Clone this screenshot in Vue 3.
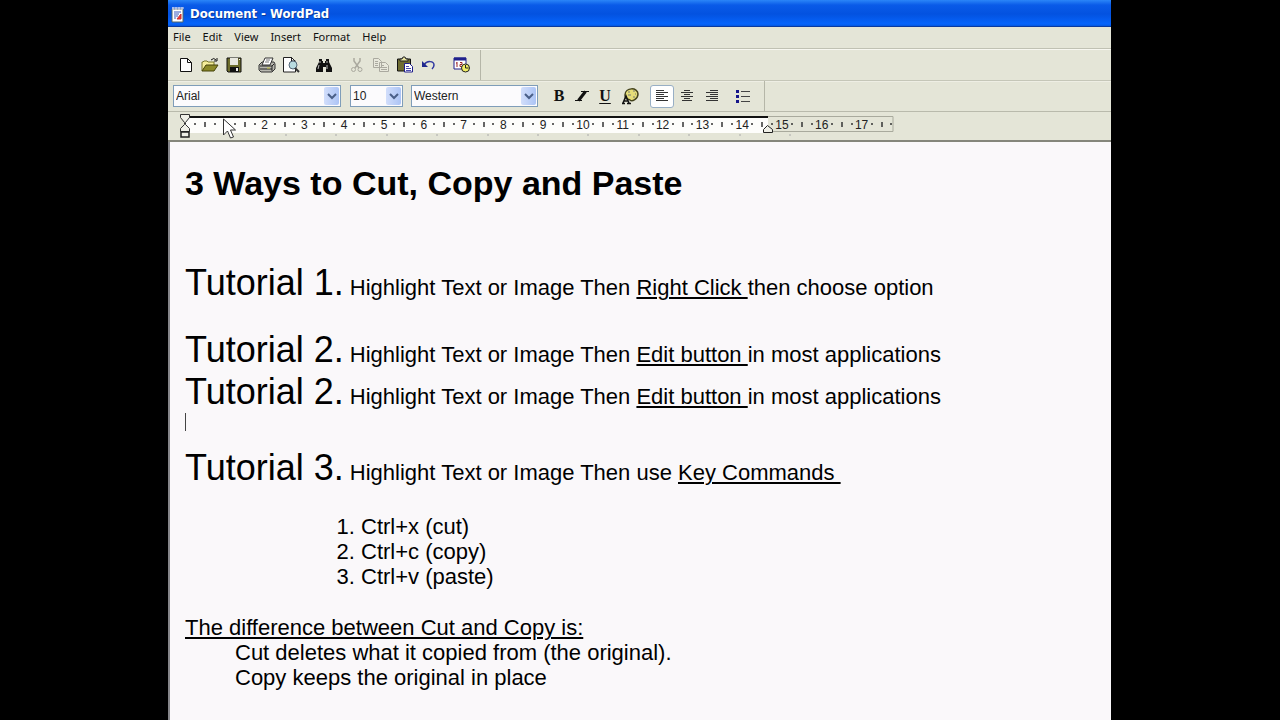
<script setup>
import { ref } from 'vue'

const menus = ['File', 'Edit', 'View', 'Insert', 'Format', 'Help']
const font = ref('Arial')
const size = ref('10')
const script = ref('Western')

const unit = 39.8
const origin = 17
const marks = Array.from({ length: 16 }, (_, i) => i + 2)
const quarters = []
for (let q = 1; q < 72; q++) {
  if (q % 4 !== 0 || q === 4) quarters.push({ x: Math.round(origin + (q * unit) / 4), half: q % 4 === 2 })
}
const tabs = Array.from({ length: 11 }, (_, i) => Math.round(origin + 101 + i * 50.4))

const tutorials = [
  { label: 'Tutorial 1.', lead: 'Highlight Text or Image Then ', mark: 'Right Click ', tail: 'then choose option', cls: 'gap' },
  { label: 'Tutorial 2.', lead: 'Highlight Text or Image Then ', mark: 'Edit button ', tail: 'in most applications', cls: '' },
  { label: 'Tutorial 2.', lead: 'Highlight Text or Image Then ', mark: 'Edit button ', tail: 'in most applications', cls: '' },
]
</script>

<template>
  <div class="screen">
    <main class="window">
      <header class="title">
        <svg width="16" height="17" viewBox="0 0 16 17">
          <path d="M2 3h11v13H2z" fill="#fff" stroke="#566" />
          <path d="M2 2h12M3 1v3M6 1v3M9 1v3M12 1v3" stroke="#dde" fill="none" />
          <path d="M4 6h7M4 8h5M4 10h4M4 12h2" stroke="#3858c0" />
          <path d="M7 13l4-5v5z" fill="#e33" stroke="#c33" />
        </svg>
        <span>Document - WordPad</span>
      </header>
      <nav class="menu">
        <button v-for="m in menus" :key="m" type="button">{{ m }}</button>
      </nav>

      <div class="bar tools">
        <div class="group">
          <button type="button" aria-label="New"><svg width="18" height="18" viewBox="0 0 18 18"><path d="M3.500 2.500h7l4 4v9h-11z" fill="#fff" stroke="#111" /><path d="M10.500 2.500v4h4" fill="none" stroke="#111" /></svg></button>
          <button type="button" aria-label="Open"><svg width="18" height="18" viewBox="0 0 18 18"><path d="M1 15V6h1l1-1h3l1 1h6v3" fill="#f5ee9a" stroke="#77742a" /><path d="M1 15l4-6h12l-4 6z" fill="#8c8a28" stroke="#45430b" /><path d="M10 4q3-3 5 0M16 2v3h-3" fill="none" stroke="#111" /></svg></button>
          <button type="button" aria-label="Save"><svg width="18" height="18" viewBox="0 0 18 18"><path d="M2 2h14v14H3l-1-1z" fill="#6d6d2c" stroke="#111" /><path d="M5 2h8v7H5z" fill="#e8e8df" /><path d="M5 11h9v5H5z" fill="#111" /><path d="M11 12h2v3h-2z" fill="#eee" /><path d="M14 3h1v1h-1z" fill="#eee" /></svg></button>
          <i class="space"></i>
          <button type="button" aria-label="Print"><svg width="18" height="18" viewBox="0 0 18 18"><path d="M1 9l3-3h12l1 2v5l-3 3H3l-2-2z" fill="#b8b8b0" stroke="#333" /><path d="M4 9l3-7h8l-3 7z" fill="#fff" stroke="#333" /><path d="M8 4h4M7 6h4" stroke="#777" /><path d="M2 10h12l2-2M2 13h12v2M14 10v3" fill="none" stroke="#222" /><path d="M9 12h3" stroke="#cc4" /></svg></button>
          <button type="button" aria-label="Print preview"><svg width="18" height="18" viewBox="0 0 18 18"><path d="M1.500 1.500h8l4 4V16h-12z" fill="#fff" stroke="#222" /><path d="M9.500 1v4h4" fill="none" stroke="#222" /><circle cx="11" cy="9" r="4" fill="#b9dce0" stroke="#567" /><path d="M13 12l4 4" stroke="#333" stroke-width="2" /></svg></button>
          <i class="space"></i>
          <button type="button" aria-label="Find"><svg width="18" height="18" viewBox="0 0 18 18"><path d="M4 3h3v2h1v2h2V5h1V3h3v3l3 6v4h-6v-5H8v5H1v-4l3-6z" fill="#111" /><path d="M5 5v2M12 5v2M4 9l-1 4M12 9v4" stroke="#bbb" /></svg></button>
          <i class="space"></i>
          <button type="button" aria-label="Cut" disabled><svg width="18" height="18" viewBox="0 0 18 18"><path d="M6 2v3l5 7M12 2v3l-5 7" fill="none" stroke="#aaa99f" stroke-width="1.500" /><circle cx="5.500" cy="13.500" r="2" fill="none" stroke="#aaa99f" /><circle cx="12" cy="13.500" r="2" fill="none" stroke="#aaa99f" /></svg></button>
          <button type="button" aria-label="Copy" disabled><svg width="18" height="18" viewBox="0 0 18 18"><path d="M1.500 2.500h5l3 3v6h-8zM7.500 6.500h6l3 3v6h-9z" fill="#e8e8dc" stroke="#aaa99f" /><path d="M3 5.500h3M3 7.500h3M3 9.500h3M9 9.500h3M9 11.500h6M9 13.500h6" stroke="#aaa99f" /></svg></button>
          <button type="button" aria-label="Paste"><svg width="18" height="18" viewBox="0 0 18 18"><path d="M1.500 3h13v12h-13z" fill="#6f6d32" stroke="#111" /><path d="M4 5V3h2l1-2h2l1 2h2v2z" fill="#e6e3a0" stroke="#222" /><path d="M8.500 7.500h5l3 3V16h-8z" fill="#fff" stroke="#20208c" /><path d="M10 10.500h3M10 12.500h5M10 14.500h5" stroke="#4a4ab0" /></svg></button>
          <button type="button" aria-label="Undo"><svg width="18" height="18" viewBox="0 0 18 18"><path d="M4 9c3-5 10-4 10 0q0 2-2 4" fill="none" stroke="#3038a0" stroke-width="1.500" /><path d="M2 5v6h6z" fill="#20288e" /></svg></button>
          <i class="space"></i>
          <button type="button" aria-label="Date/Time"><svg width="18" height="18" viewBox="0 0 18 18"><path d="M1 2h12v11H1z" fill="#fff" stroke="#20208c" /><path d="M1 3h12" stroke="#20208c" stroke-width="3" /><path d="M4 6v5M3 7h1M7 6.500h2v2H7v2h3" fill="none" stroke="#922" /><circle cx="12.500" cy="12" r="4" fill="#f3ee65" stroke="#222" /><path d="M12.500 9v3h3" fill="none" stroke="#222" /></svg></button>
        </div>
      </div>

      <div class="bar format">
        <div class="group">
          <label class="combo wide"><select v-model="font" aria-label="Font"><option>Arial</option></select><span class="arrow"><svg width="10" height="8" viewBox="0 0 10 8"><path d="M1 2l4 4 4-4" /></svg></span></label>
          <label class="combo small"><select v-model="size" aria-label="Font size"><option>10</option></select><span class="arrow"><svg width="10" height="8" viewBox="0 0 10 8"><path d="M1 2l4 4 4-4" /></svg></span></label>
          <label class="combo mid"><select v-model="script" aria-label="Font script"><option>Western</option></select><span class="arrow"><svg width="10" height="8" viewBox="0 0 10 8"><path d="M1 2l4 4 4-4" /></svg></span></label>
          <button type="button" class="letter">B</button>
          <button type="button" aria-label="Italic"><svg width="18" height="18" viewBox="0 0 18 18"><path d="M8 4.500h8M2 13.500h7" stroke="#111" /><path d="M12.500 4.500l-7 9" stroke="#111" stroke-width="3" /></svg></button>
          <button type="button" class="letter under">U</button>
          <button type="button" class="color" aria-label="Color"><svg width="18" height="18" viewBox="0 0 18 18"><path d="M4 8c0-8 13-8 13-1 0 5-6 8-8 6-1-2-5 1-5-5z" fill="#e5dd78" stroke="#44431d" stroke-width="1.500" /><path d="M7 5h2M12 4h2M14 7h1M12 10h2M7 8h3" stroke="#997" stroke-width="1.500" /><path d="M2 16l3-7 3 7M3 14h4M1 16.500h3M6 16.500h4" fill="none" stroke="#111" stroke-width="1.500" /></svg></button>
          <button type="button" class="pressed" aria-label="Align left"><svg width="18" height="18" viewBox="0 0 18 18"><path d="M3 3.500h8M3 5.500h12M3 7.500h8M3 9.500h12M3 11.500h8M3 13.500h12" /></svg></button>
          <button type="button" class="align" aria-label="Center"><svg width="18" height="18" viewBox="0 0 18 18"><path d="M6 3.500h6M3 5.500h12M6 7.500h6M3 9.500h12M6 11.500h6M4 13.500h10" /></svg></button>
          <button type="button" class="align" aria-label="Align right"><svg width="18" height="18" viewBox="0 0 18 18"><path d="M7 3.500h8M3 5.500h12M7 7.500h8M3 9.500h12M7 11.500h8M3 13.500h12" /></svg></button>
          <button type="button" class="bullets" aria-label="Bullets"><svg width="18" height="18" viewBox="0 0 18 18"><path d="M7 4.500h9M7 9.500h9M7 14.500h9" stroke="#444" /><path d="M2 3h3v3H2zM2 8h3v3H2zM2 13h3v3H2z" fill="#15158a" /></svg></button>
        </div>
      </div>

      <div class="ruler">
        <svg width="740" height="28" viewBox="0 0 740 28">
          <path d="M17 5h583v16H17z" fill="#fdfdfb" />
          <path d="M17 5h583" stroke="#111" stroke-width="2" />
          <path d="M600 4.500h125v15H600" fill="none" stroke="#a9aa9d" />
          <path v-for="q in quarters" :key="q.x" :d="q.half ? `M${q.x} 10v5` : `M${q.x} 11v2`" stroke="#333" stroke-width="1.500" />
          <text v-for="m in marks" :key="m" :x="origin + m * unit" y="17" text-anchor="middle">{{ m }}</text>
          <path v-for="t in tabs" :key="t" :d="`M${t} 22v2`" stroke="#aaa" />
          <path d="M12.500 2.500h9v3l-4 5v2l4 4v3h-9v-3l4-4v-2l-4-5z" fill="#f0f0e8" stroke="#333" />
          <path d="M13 20h8v5h-8z" fill="#f0f0e8" stroke="#222" stroke-width="1.500" />
          <path d="M595.500 20.500v-3l4-4 5 4v3z" fill="#f0f0e8" stroke="#222" />
        </svg>
        <svg class="pointer" width="14" height="22" viewBox="0 0 14 22"><path d="M1.500 1v16l4-4 3 7 3-1-3-7h5z" fill="#fff" stroke="#333" /></svg>
      </div>

      <article class="document">
        <h1>3 Ways to Cut, Copy and Paste</h1>
        <p v-for="(t, i) in tutorials" :key="i" class="tutorial" :class="t.cls"><span class="label">{{ t.label }}</span> {{ t.lead }}<u>{{ t.mark }}</u>{{ t.tail }}</p>
        <div class="blank"><i class="caret"></i></div>
        <p class="tutorial"><span class="label">Tutorial 3.</span> Highlight Text or Image Then use <u>Key Commands&nbsp;</u></p>
        <ol>
          <li>Ctrl+x (cut)</li>
          <li>Ctrl+c (copy)</li>
          <li>Ctrl+v (paste)</li>
        </ol>
        <p><u>The difference between Cut and Copy is:</u></p>
        <p class="indent">Cut deletes what it copied from (the original).</p>
        <p class="indent">Copy keeps the original in place</p>
      </article>
    </main>
  </div>
</template>

<style>
body { background: #000; }
</style>

<style scoped>
.screen { display: flex; min-height: 100vh; padding: 0 169px 0 168px; box-sizing: border-box; background: #000; }
.window { flex: 1; min-width: 0; display: flex; flex-direction: column; background: #e4e5d7; font-family: "Noto Sans", "Liberation Sans", sans-serif; color: #111; }
button { border: 0; padding: 0; background: none; font: inherit; color: inherit; }
svg { display: block; }
.title { display: flex; align-items: center; gap: 4px; height: 27px; padding: 2px 2px 0; box-sizing: border-box; border-bottom: 1px solid #0a3aa0; background: linear-gradient(#2b86f8 0, #0a5be8 5px, #0352e0 14px, #0664fb 24px, #0450d0 27px); color: #fff; font: bold 13px/24px "DejaVu Sans Condensed", sans-serif; text-shadow: 1px 1px #0a3a9a; }
.menu { display: flex; gap: 12px; height: 19px; padding: 0 5px 2px; font-size: 11px; line-height: 19px; border-bottom: 1px solid #c0c1b3; }
.bar { display: flex; border-top: 1px solid #f7f7f0; height: 30px; }
.group { display: flex; align-items: center; border-right: 1px solid #b5b6a8; }
.tools .group { padding: 0 9px 0 9px; gap: 6px; }
.space { width: 3px; }
.format { border-top: 1px solid #c5c6b8; box-shadow: inset 0 1px #eeeee4; }
.format .group { padding: 0 12px 0 5px; }
.combo { position: relative; display: flex; height: 22px; box-sizing: border-box; border: 1px solid #7f9db9; background: #fcfbfd; }
.combo select { appearance: none; flex: 1; width: 100%; min-width: 0; border: 0; padding: 0 2px; background: none; color: #222; font: 12px/20px "Liberation Sans", sans-serif; }
.arrow { position: absolute; top: 1px; right: 1px; bottom: 1px; width: 15px; display: flex; align-items: center; justify-content: center; background: linear-gradient(90deg, #d2defb, #acc4f5); border-radius: 2px; pointer-events: none; }
.arrow path { fill: none; stroke: #4a5f88; stroke-width: 2; }
.wide { width: 168px; margin-right: 9px; }
.small { width: 53px; margin-right: 8px; }
.mid { width: 127px; margin-right: 12px; }
.letter { width: 18px; margin-right: 5px; font: bold 16px/22px "Liberation Serif", serif; }
.letter + button { margin-right: 5px; }
.under { text-decoration: underline; text-underline-offset: 2px; }
.letter + .color { margin: 0 0 0 2px; }
.pressed { display: flex; align-items: center; justify-content: center; width: 24px; height: 23px; margin: 0 4px 0 11px; box-sizing: border-box; border: 1px solid #98afc5; border-radius: 3px; background: #fff; }
.pressed path, .align path { stroke: #333; }
.align { margin-right: 7px; }
.bullets { margin-left: 6px; }
.ruler { position: relative; height: 28px; border-top: 1px solid #b9baac; border-bottom: 2px solid #85867b; overflow: hidden; }
.ruler text { font: 12px "Liberation Sans", sans-serif; fill: #222; }
.pointer { position: absolute; left: 54px; top: 6px; }
.document { flex: 1; padding: 20px 15px 20px 15px; border-left: 2px solid #85858a; background: #faf8fa; color: #000; font: 22px/25px "Liberation Sans", Arial, sans-serif; }
h1 { margin: 0 0 58px; font-size: 34px; line-height: 42px; }
p { margin: 0; }
u { text-decoration-thickness: 2px; text-underline-offset: 2px; white-space: pre-wrap; }
.tutorial.gap { margin-bottom: 25px; }
.label { font-size: 36px; line-height: 42px; }
.blank { height: 34px; }
.caret { display: block; width: 1px; height: 18px; background: #444; }
ol { margin: 25px 0 26px; padding-left: 176px; }
.indent { padding-left: 50px; }
</style>
